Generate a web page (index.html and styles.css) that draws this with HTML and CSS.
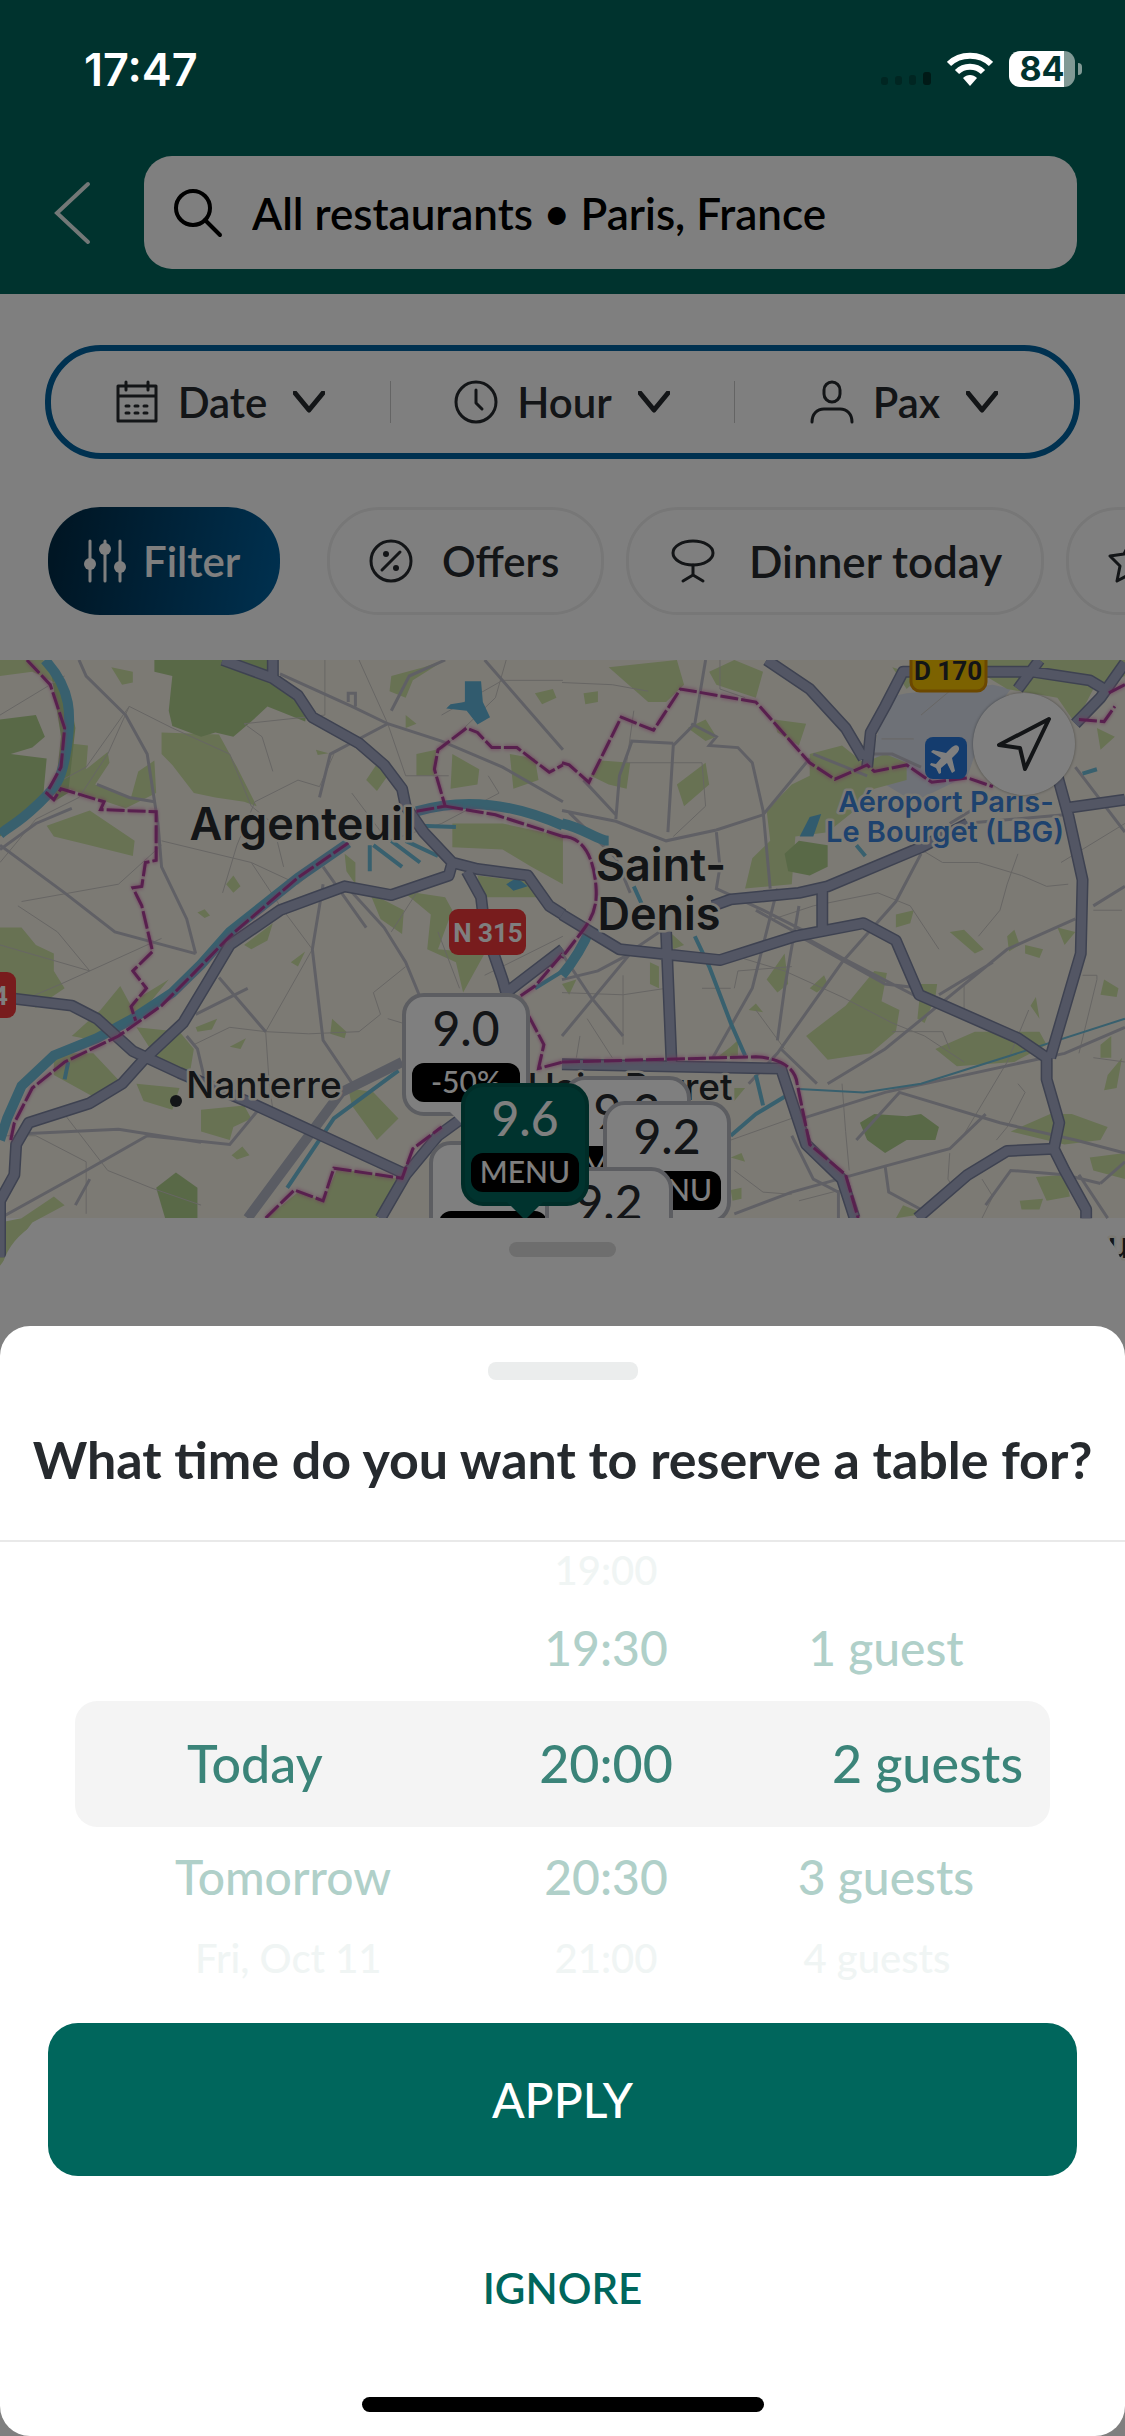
FILE: index.html
```
<!DOCTYPE html>
<html lang="en">
<head>
    <meta charset="UTF-8">
    <meta name="viewport" content="width=device-width, initial-scale=1.0">
    <title>Restaurants in Paris</title>
    <link rel="stylesheet" href="styles.css">
</head>
<body>
    <div class="screen">
        <div class="app">
            <header class="header">
                <button class="back-button" aria-label="Back">
                    <svg width="42" height="64" viewBox="0 0 42 64"><path d="M36 3L5 32l31 29" fill="none" stroke="#fff" stroke-width="4" stroke-linecap="round"/></svg>
                </button>
                <div class="search-box">
                    <svg width="50" height="50" viewBox="0 0 50 50" fill="none" stroke="#000" stroke-width="4" stroke-linecap="round"><circle cx="20" cy="20" r="17"/><path d="M32 32l15 15"/></svg>
                    <input class="search-input" type="text" aria-label="Search" value="All restaurants • Paris, France">
                </div>
            </header>

            <div class="filters">
                <div class="booking-bar">
                    <button class="booking-button">
                        <svg class="icon" viewBox="0 0 42 42"><path d="M2 5h38v35H2zM2 15h38M10 1v8M32 1v8"/><path d="M10 25h3M19 25h3M28 25h3M10 32h3M19 32h3M28 32h3"/></svg>
                        Date
                        <svg class="arrow" viewBox="0 0 32 22"><path d="M2 2l14 17L30 2"/></svg>
                    </button>
                    <button class="booking-button">
                        <svg class="icon" viewBox="0 0 42 42"><circle cx="21" cy="21" r="20"/><path d="M21 9v13l6 6"/></svg>
                        Hour
                        <svg class="arrow" viewBox="0 0 32 22"><path d="M2 2l14 17L30 2"/></svg>
                    </button>
                    <button class="booking-button">
                        <svg class="icon" viewBox="0 0 42 42"><rect x="13" y="1" width="16" height="20" rx="8"/><path d="M1 41c0-8 5-13 12-13h16c7 0 12 5 12 13"/></svg>
                        Pax
                        <svg class="arrow" viewBox="0 0 32 22"><path d="M2 2l14 17L30 2"/></svg>
                    </button>
                </div>
                <div class="chips">
                    <button class="chip chip-filter">
                        <svg class="icon" viewBox="0 0 42 42"><path d="M6 1v40M21 1v40M36 1v40"/><g fill="#fff" stroke="none"><circle cx="6" cy="24" r="6"/><circle cx="21" cy="9" r="6"/><circle cx="36" cy="27" r="6"/></g></svg>
                        Filter
                    </button>
                    <button class="chip chip-offers">
                        <svg class="icon" viewBox="0 0 42 42"><circle cx="21" cy="21" r="20"/><path d="M12 30l18-18"/><g fill="#262a2e" stroke="none"><circle cx="16" cy="14" r="3"/><circle cx="26" cy="28" r="3"/></g></svg>
                        Offers
                    </button>
                    <button class="chip chip-dinner">
                        <svg class="icon" viewBox="0 0 42 42"><ellipse cx="21" cy="13" rx="20" ry="12"/><path d="M21 25v10M11 41l10-6 10 6"/></svg>
                        Dinner today
                    </button>
                    <button class="chip chip-star" aria-label="Top rated">
                        <svg class="icon" viewBox="0 0 42 42"><path d="M21 2l6 12 14 2-10 10 3 15-13-7-13 7 3-15L1 16l14-2z"/></svg>
                    </button>
                </div>
            </div>

            <main class="map">
                <svg class="map-canvas" viewBox="0 0 1125 680" preserveAspectRatio="xMidYMin slice">
                    <!-- west tile -->
                    <g class="tile" transform="translate(0 -10) scale(.359 .4337)">
                        <g class="park">
                            <path d="M450 190L610 195 660 270 715 360 680 350 600 340 540 330 480 265 450 240z"/>
                            <path d="M190 215L245 220 240 275 300 235 305 260 265 310 365 340 385 280 430 255 435 330 350 365 190 320z"/>
                            <path d="M130 405L250 370 375 440 370 475 250 450 150 430z"/>
                            <path d="M0 640L60 640 100 680 150 700 150 740 180 780 100 825 40 790 0 800z"/>
                            <path d="M200 890L280 830 335 775 365 820 390 800 470 760 410 820 260 900z"/>
                            <path d="M380 870L500 880 540 920 530 970 450 960zM150 930L260 930 340 1000 260 1030 150 980zM380 1000L500 1010 480 1060 400 1040z"/>
                            <path d="M190 90L120 23H0V60L90 50z"/>
                            <path d="M310 40L370 50 370 75 340 80zM630 540L650 520 670 545 650 560zM550 605L570 598 585 612 570 618zM680 680L760 630 745 670 700 690z"/>
                            <path d="M1090 60L1180 40 1240 23 1150 70 1130 110 1085 95zM1490 100L1540 90 1550 110 1510 125zM1130 150L1160 170 1130 180zM880 230L915 238 885 242z"/>
                            <path d="M1160 240L1215 230 1210 290 1160 290zM1260 240L1335 275 1330 310 1255 320zM1420 240L1490 250 1500 300 1430 320z"/>
                            <path d="M1260 400L1400 400 1568 430V540L1480 500 1400 460 1260 455zM1330 520L1480 535 1500 570 1340 570z"/>
                            <path d="M1030 560L1125 600 1120 655 1060 620zM1120 555L1240 570 1260 600 1220 690 1350 700 1290 790 1270 720 1190 690 1200 610zM960 470L990 490 990 540 965 510zM1020 300L1060 250 1080 290 1050 325z"/>
                            <path d="M810 720L850 695 830 730zM925 850L965 880 960 895 920 885zM640 915L685 895 670 920zM645 1165L675 1145 695 1165 660 1175zM545 870L605 850 590 875 550 880z"/>
                            <path d="M560 1060L680 1050 700 1080 650 1100 640 1130 560 1110zM970 1010L1040 1020 1110 1080 1050 1130 980 1050z"/>
                            <path d="M940 1195L1110 1220 1050 1310H740L830 1250 900 1270zM60 1310L150 1260 180 1280 90 1320 0 1420V1320z"/>
                        </g>
                        <g class="forest">
                            <path d="M430 23H775L770 50 800 90 860 120 850 165 745 130 700 165 650 200 600 190 560 200 480 175 470 140 480 60 430 50z"/>
                            <path d="M0 160L100 150 125 200 90 225 30 240 130 250 120 340 0 430zM140 40L190 90 210 180 190 330 150 350 170 200z"/>
                            <path d="M435 1240L490 1205 550 1240 550 1310H460z"/>
                        </g>
                        <g class="minor">
                            <path d="M0 150L180 60M150 310L240 270 360 130 480 180 640 240 700 360 760 400 790 500M360 130L300 240 220 340 100 390 0 490M620 560L660 450 710 350 830 300 890 315 930 240"/>
                            <path d="M450 440L700 490 830 540 960 450M700 490L780 590 870 690 740 880 640 870 540 910M740 880L860 885 1000 880 1060 840 1040 790 1130 730M0 680L250 740 450 665M250 740L170 770 0 830M50 590L160 650 250 740M60 580L330 540 450 450"/>
                            <path d="M740 880L750 1000 760 1060M170 1060L300 1200 420 1240 560 1280M0 1120L100 1120 240 1180 240 1300M980 330L1080 440 1230 400 1390 330 1360 290M1000 23L1080 170 1130 290 1250 290M905 23V150L680 170 730 200 760 280M1410 23L1380 110 1230 230M1568 70L1400 70 1230 150M1080 850L1200 880M1090 650L1160 560 1260 520M1350 750L1568 660M1220 650L1280 780"/>
                        </g>
                        <g class="road">
                            <path d="M220 23L240 60 350 150 410 240 440 400 450 500 520 620 545 700M0 450L180 560 320 650 545 700M0 1310L240 1200 410 1120 640 1140 720 1060M80 1115L330 1105 560 1135M0 460L100 400 200 365M780 55L980 130 1080 170 1230 210 1400 270 1568 350M1080 170L920 240 890 340M1240 23L1140 60 1090 140M545 840L690 780M610 755L740 880M900 540L870 690 900 900 990 1010M960 540L1070 640 1130 720 1170 800M990 130V100H970V120M900 500L1020 640M1350 23L1568 230M520 890L550 920 570 990M210 1280L250 1220"/>
                            <path d="M270 310L360 340 430 350"/>
                        </g>
                        <g class="water">
                            <path class="river" d="M125 23C200 90 200 150 185 230S150 320 100 360 20 410 0 425"/>
                            <path class="river" d="M970 445L830 525 640 650 560 725 480 790 370 850 270 895 150 935 60 1005 20 1080 0 1130"/>
                            <path class="river" d="M1160 372C1300 340 1430 355 1568 405"/>
                            <path class="stream" d="M1170 405L1270 408M1030 450V510M1040 450L1120 500M1090 440L1170 490M1130 440L1220 475M1568 740L1490 780M800 1240L930 1080 1110 970M180 990L190 950"/>
                            <path class="lake" d="M1295 72H1340L1345 120 1365 155 1330 172 1300 140 1243 135 1255 125 1295 120zM1410 540L1440 525 1470 545 1430 555z"/>
                        </g>
                        <path class="road wide" d="M690 1310L950 1020 1120 950"/>
                        <g class="highway-edge">
                            <path id="west-roads" d="M620 23L760 65 830 105 870 155 1000 215 1070 265 1120 320 1130 360 1180 420 1260 490 1330 505 1470 520 1530 590 1568 610M760 23V65M1260 490L1250 520 1090 565 960 545 780 600 640 680 590 750 510 860 400 945 340 1000 250 1045 80 1090 45 1140 40 1210 0 1270V1400M0 800L200 820 270 850 370 925 500 975 700 1045 1120 1205M1300 510L1340 570 1350 640 1400 760 1410 790 1568 690M1060 1310L1130 1210 1220 1120 1320 1060"/>
                        </g>
                        <use href="#west-roads" class="highway"/>
                        <g class="border">
                            <path d="M75 23L140 80 180 180 170 270 130 330 150 345 170 320 290 350 280 368 435 373V485L405 490 395 545 370 548 395 590 425 695 370 740 408 780 365 822 378 855M970 445L830 525 640 660 540 745 450 820 330 890 180 950 90 1010 40 1090 30 1130"/>
                            <path d="M1160 372L1240 360 1210 275 1220 230 1300 180 1330 190 1370 225 1440 225 1530 282 1568 265M1240 360L1380 380 1568 430M1568 700L1490 775 1445 800 1515 910 1500 965 1568 950M740 1310L820 1245 900 1270 930 1195 1120 1218 1150 1150 1230 1100"/>
                        </g>
                    </g>
                    <!-- east tile -->
                    <g class="tile" transform="translate(562 -10) scale(.359 .4337)">
                        <g class="airport">
                            <path d="M900 110L960 100 1200 80 1250 90 1180 170 1130 290 980 350 880 300 870 230z"/>
                        </g>
                        <g class="park">
                            <path d="M130 40L320 23 340 80 290 120 240 120zM60 100L100 95 100 120 65 125zM80 290L110 255 190 260 180 320 130 310zM350 180L400 160 430 200 400 210zM320 310L400 260 410 310 340 360z"/>
                            <path d="M410 50L480 23 560 50 540 110 430 80zM590 160L680 170 660 220 600 190zM690 240L780 220 840 260 900 240 960 260 960 300 870 320 830 360 740 420 650 430 640 540 510 550 530 480 580 440 570 370 640 310 690 290z"/>
                            <path d="M920 40L1000 60 960 90zM1180 23H1568V60L1480 90 1430 170 1380 110 1240 90 1180 60zM1490 180L1540 200 1500 230z"/>
                            <path d="M680 890L790 820 870 740 905 745 890 810 940 830 930 880 860 930 740 945z"/>
                            <path d="M1080 650L1120 645 1175 690 1150 700zM1240 660L1260 645 1275 680 1245 695zM1290 680L1340 690 1330 710 1290 700zM1380 640L1430 650 1400 680zM930 610L980 600 970 630 930 640zM1000 770L1045 770 1040 800 1010 860 990 850z"/>
                            <path d="M1040 920L1150 880 1330 880 1350 910 1260 950 1100 960zM1510 760L1550 780 1545 800 1500 795zM1500 910L1530 890 1530 940 1500 940zM1520 980L1560 940 1545 1010 1510 1015zM1305 820L1320 800 1330 850z"/>
                            <path d="M1360 1070L1420 1070 1520 1100 1500 1130 1400 1140 1250 1110zM1320 1215L1400 1210 1415 1260 1350 1270zM1275 1270L1340 1265 1330 1290 1280 1290zM1470 1170L1568 1160V1220L1480 1200zM930 1310L950 1280 1010 1300z"/>
                            <path d="M570 760L620 700 630 770 600 790zM690 780L730 750 740 770 710 790zM520 830L540 815 560 835zM245 720L270 730 270 780 245 770zM0 770L40 760 20 795zM300 650L340 680 310 690zM480 1010L510 1010 480 1040zM470 1170L500 1160 510 1180zM470 1245L500 1240 500 1265 475 1270zM470 915L490 900 490 935 430 940z"/>
                        </g>
                        <g class="forest">
                            <path d="M620 470L660 440 740 450 740 500 690 520 630 510zM830 1090L870 1070 960 1075 1000 1070 1050 1100 1040 1130 960 1130 900 1160 850 1130z"/>
                        </g>
                        <g class="minor">
                            <path d="M0 75L140 80 240 95M200 140L180 260 390 260 400 360 310 430M440 23V90L510 110M590 620L700 590 880 560 970 590 1050 690M1000 460L1060 490 1160 490 1280 520 1350 545 1410 540M1270 470L1240 540 1220 600 1160 660M500 710L620 740 780 800 920 860 1010 890 1120 950M480 780L490 740 640 730M0 790L170 795 290 780M170 750V910M70 850L140 940M50 890L40 940M390 780H470M540 830L620 920M920 880H1060L1080 920M1110 1130L1240 950 1300 830M1120 770V850L1180 870M1450 750H1490L1490 760 1440 930M1270 1000L1290 1020 1240 1100 1210 1130M780 1000L790 1110 800 1200M1170 1220L1200 1260 1170 1310M1480 940L1568 950M470 1130L640 1080M480 1200L560 1250 640 1255M660 1270L800 1240M1080 1160L1075 1220 1090 1240M1000 150L1130 60M890 205L980 205M1560 600L1480 600M1390 490L1568 400"/>
                        </g>
                        <g class="road">
                            <path d="M0 370L150 395 290 440 430 415 560 380 690 250M400 23L370 170 310 220 295 420M190 210L310 215M360 170L430 200 410 220 490 225 530 260 560 370 580 550M20 375L150 480 190 560M150 390L160 290 195 210M430 420L440 500 430 550 560 600 680 650M60 300L150 380M0 890L200 690 290 640M0 700L80 800 170 890M600 550L530 780 420 940M660 590L620 780 600 900M1000 470L930 580 780 720 600 930 520 1000M540 600L780 710 990 800M640 650L900 770 1000 780M740 1000L900 920 1240 690 1430 620M1050 795L1200 720M610 920L710 1000M670 1080L900 1020 1400 930 1568 870M820 1130L940 1020 1220 1090 1430 1130 1568 1160M900 1190L1080 1150 1180 1070M900 1190L910 1250 1000 1290M640 1120L700 1220 770 1250V1310M480 1300L640 1250 900 1190M1500 1230L1568 1180M1440 1210L1520 1310M1180 1280L1250 1200 1400 1210 1500 1230M700 240L850 290M860 240L920 240 1000 270M1120 400L1400 380M1080 400L1180 350M0 760L100 740 190 700M1430 270L1568 420M1480 590L1568 545"/>
                        </g>
                        <g class="water">
                            <path class="river" d="M0 400C60 410 100 440 130 440"/>
                            <path class="river" d="M80 640C60 680 30 720 0 750"/>
                            <path class="stream" d="M200 545L230 600M370 660L410 730 470 860 510 935M540 980L560 1050M470 1120L540 1070 620 1030M1450 285L1490 275M820 450L845 475"/>
                            <path class="canal" d="M660 1012L840 1020 1000 1000 1250 935 1568 850"/>
                            <path class="lake" d="M690 385L722 378 700 430 662 430z"/>
                        </g>
                        <g class="highway-edge">
                            <path id="east-roads" d="M570 23L690 90 790 180 840 250M850 270L860 190 900 130 950 50H1310L1470 70 1520 95M1330 23L1270 90M1568 30L1500 110 1430 170M1380 290L1410 380 1450 530 1445 700 1360 940M1400 365L1568 345M1130 400L1000 455 740 545 660 560 470 575 420 590M725 545V650M0 610L160 690 440 715 650 660 840 630 930 670 995 795 1270 895 1350 940 1350 990 1385 1090 1370 1150 1240 1155 1130 1210 990 1310M1370 1150L1400 1200 1460 1290V1310M290 650L305 950M0 955L610 965 680 1140 780 1220 815 1310"/>
                        </g>
                        <use href="#east-roads" class="highway"/>
                        <g class="border">
                            <path d="M0 260L20 265 75 305 165 155 255 185 330 90 540 120 690 260 760 298 850 265 870 280 960 265 1030 305 1130 295 1200 315M1440 160L1510 165 1540 130M1568 80L1520 100M0 430C60 430 90 480 95 550S60 640 0 710M0 950L540 938C600 940 650 960 655 1000L690 1140 790 1210 825 1310"/>
                        </g>
                    </g>
                    <rect class="sign sign-red" x="449" y="249" width="77" height="46" rx="9"/>
                    <text class="sign-text" x="488" y="282">N 315</text>
                    <rect class="sign sign-red" x="-60" y="312" width="76" height="46" rx="9"/>
                    <text class="sign-text" x="-7" y="345">14</text>
                    <rect class="sign sign-yellow" x="911" y="-20" width="75" height="51" rx="9"/>
                    <text class="sign-text sign-dark" x="948" y="20">D 170</text>
                    <rect class="airport-sign" x="925" y="77" width="42" height="42" rx="8"/>
                    <path d="M958 86c-2-2-5 0-7 2l-5 5-13-3-2 2 10 6-5 6-5-1-1 2 6 3 3 6 2-1v-5l6-5 5 10 3-2-3-13 5-5c2-2 3-5 1-7z" fill="#fff"/>
                    <text class="label city" x="302" y="180">Argenteuil</text>
                    <text class="label city" x="661" y="221">Saint-</text>
                    <text class="label city" x="659" y="270">Denis</text>
                    <text class="label town" x="264" y="438">Nanterre</text>
                    <circle cx="176" cy="441" r="6" fill="#262a2e"/>
                    <text class="label town" x="630" y="440">Hain-Perret</text>
                    <text class="label town" x="1123" y="598">ui</text>
                    <text class="label airport-name" x="946" y="152">Aéroport Paris-</text>
                    <text class="label airport-name" x="945" y="182">Le Bourget (LBG)</text>
                    <text class="label river-name" x="-14" y="520" transform="rotate(-58 -14 520)">vry</text>
                </svg>
                <button class="locate-button" aria-label="My location">
                    <svg width="56" height="56" viewBox="0 0 56 56"><path d="M53 3L3 29l21 3 5 21z" fill="none" stroke="#262a2e" stroke-width="4" stroke-linejoin="round"/></svg>
                </button>
                <button class="pin pin-a"><span class="score">9.0</span><span class="tag">-50%</span></button>
                <button class="pin pin-b" aria-label="Restaurant"><span class="score"></span><span class="tag"></span></button>
                <button class="pin pin-c"><span class="score">9.2</span><span class="tag">MENU</span></button>
                <button class="pin pin-d"><span class="score">9.2</span><span class="tag">MENU</span></button>
                <button class="pin pin-e"><span class="score">9.2</span><span class="tag"></span></button>
                <button class="pin pin-active"><span class="score">9.6</span><span class="tag">MENU</span></button>
            </main>
            <div class="results"><div class="results-handle"></div></div>
        </div>

        <div class="overlay"></div>

        <div class="status-bar">
            <span class="clock">17:47</span>
            <div class="status-icons">
                <svg width="50" height="16" viewBox="0 0 50 16" fill="#002622"><rect y="6" width="7" height="8" rx="3"/><rect x="14" y="5" width="7" height="9" rx="3"/><rect x="28" y="4" width="7" height="10" rx="3"/><rect x="42" y="1" width="8" height="13" rx="3" fill="#001a17"/></svg>
                <svg width="46" height="34" viewBox="0 0 46 34" fill="none" stroke="#fff" stroke-width="6"><path d="M2 12C13 1 33 1 44 12"/><path d="M10 20c7-7 19-7 26 0"/><path d="M23 34l-7-8c4-4 10-4 14 0z" fill="#fff" stroke="none"/></svg>
                <div class="battery"><span class="battery-level">84</span></div>
            </div>
        </div>

        <section class="sheet">
            <div class="sheet-header">
                <div class="sheet-handle"></div>
                <h1 class="sheet-title">What time do you want to reserve a table for?</h1>
            </div>
            <div class="picker">
                <div class="picker-row far">
                    <span></span>
                    <button class="option">19:00</button>
                    <span></span>
                </div>
                <div class="picker-row near">
                    <span></span>
                    <button class="option">19:30</button>
                    <button class="option">1 guest</button>
                </div>
                <div class="picker-row selected">
                    <button class="option day">Today</button>
                    <button class="option">20:00</button>
                    <button class="option guests">2 guests</button>
                </div>
                <div class="picker-row near">
                    <button class="option day">Tomorrow</button>
                    <button class="option">20:30</button>
                    <button class="option">3 guests</button>
                </div>
                <div class="picker-row far">
                    <button class="option day">Fri, Oct 11</button>
                    <button class="option">21:00</button>
                    <button class="option">4 guests</button>
                </div>
            </div>
            <button class="apply-button">APPLY</button>
            <button class="ignore-button">IGNORE</button>
            <div class="home-indicator"></div>
        </section>
    </div>
</body>
</html>
```
FILE: styles.css
```
* {
    box-sizing: border-box;
}

body {
    margin: 0;
    font-family: Lato, "Open Sans", sans-serif;
    color: #262a2e;
    background-color: #7f7f7f;
}

button,
input {
    margin: 0;
    padding: 0;
    border: none;
    background: none;
    font: inherit;
    color: inherit;
    cursor: pointer;
}

.screen {
    position: relative;
    min-height: 100vh;
    overflow: hidden;
}

.app {
    display: flex;
    flex-direction: column;
    min-height: 100vh;
    background-color: #fff;
}

/* Header */
.header {
    display: flex;
    align-items: center;
    gap: 50px;
    padding: 156px 48px 25px 52px;
    background-color: #00665c;
}

.back-button {
    display: flex;
    opacity: 0.9;
}

.search-box {
    flex: 1;
    display: flex;
    align-items: center;
    gap: 29px;
    height: 113px;
    padding: 0 29px;
    border-radius: 28px;
    background-color: #fff;
}

.search-input {
    flex: 1;
    min-width: 0;
    font-size: 44px;
    font-weight: 600;
    color: #000;
}

/* Filters */
.filters {
    padding: 51px 0 45px;
    font-size: 42px;
    font-weight: 600;
}

.icon {
    flex: none;
    width: 42px;
    height: 42px;
    overflow: visible;
    fill: none;
    stroke: #262a2e;
    stroke-width: 3;
    stroke-linecap: round;
    stroke-linejoin: round;
}

.arrow {
    width: 32px;
    height: 22px;
    margin-left: 6px;
    fill: none;
    stroke: #262a2e;
    stroke-width: 5;
    stroke-linecap: round;
    stroke-linejoin: round;
}

.booking-bar {
    display: grid;
    grid-template-columns: 339fr 344fr 340fr;
    align-items: center;
    height: 114px;
    margin: 0 45px 48px;
    border: 6px solid #0062a0;
    border-radius: 56px;
}

.booking-button {
    display: flex;
    align-items: center;
    justify-content: center;
    gap: 20px;
    height: 42px;
}

.booking-button + .booking-button {
    border-left: 1px solid #c8c8c8;
}

.chips {
    display: flex;
    gap: 22px;
    padding-left: 48px;
    overflow: hidden;
}

.chip {
    flex: none;
    display: flex;
    align-items: center;
    height: 108px;
    border: 3px solid #eeeeee;
    border-radius: 52px;
}

.chip-filter {
    gap: 17px;
    width: 232px;
    margin-right: 25px;
    padding-left: 36px;
    border: none;
    color: #fff;
    background: linear-gradient(100deg, #002c48 5%, #0062a0);
}

.chip-filter .icon {
    stroke: #fff;
}

.chip-offers {
    gap: 30px;
    width: 277px;
    padding-left: 40px;
}

.chip-dinner {
    gap: 35px;
    width: 418px;
    padding-left: 43px;
    font-size: 44px;
}

.chip-star {
    width: 277px;
    padding-left: 40px;
}

/* Map */
.map {
    position: relative;
    height: 558px;
    background-color: #f8f4e9;
}

.map-canvas {
    display: block;
    width: 100%;
    height: 680px;
}

.tile path,
.tile use {
    vector-effect: non-scaling-stroke;
}

.park {
    fill: #d0e4a6;
}

.forest {
    fill: #b2d28f;
}

.airport {
    fill: #dce2ee;
}

.minor {
    fill: none;
    stroke: #cfccc8;
    stroke-width: 1;
}

.road {
    fill: none;
    stroke: #c0c0ca;
    stroke-width: 3;
}

.wide {
    stroke: #b4b8c6;
    stroke-width: 10;
}

.water {
    fill: none;
    stroke: #70c0dc;
}

.river {
    stroke-width: 10;
}

.stream {
    stroke-width: 4;
}

.canal {
    stroke-width: 2;
}

.lake {
    fill: #62b6dc;
    stroke: none;
}

.highway-edge {
    fill: none;
    stroke: #7c84a2;
    stroke-width: 12;
    stroke-linejoin: round;
}

.highway {
    fill: none;
    stroke: #a6adc8;
    stroke-width: 9;
    stroke-linejoin: round;
}

.border {
    fill: none;
    stroke: #b0409c;
    stroke-width: 3;
    stroke-dasharray: 18 3;
    filter: drop-shadow(0 0 5px #e070b8);
}

.sign-red {
    fill: #f0393b;
}

.sign-yellow {
    fill: #f8c400;
    stroke: #d89000;
    stroke-width: 3;
}

.airport-sign {
    fill: #2878dc;
}

.sign-text {
    font-family: Roboto, Arial, sans-serif;
    font-size: 26px;
    font-weight: 700;
    text-anchor: middle;
    fill: #fff;
}

.sign-dark {
    fill: #262a2e;
}

.label {
    font-family: Inter, sans-serif;
    text-anchor: middle;
    fill: #262a2e;
    stroke: #f8f4e9;
    stroke-width: 5;
    stroke-linejoin: round;
    paint-order: stroke;
}

.city {
    font-size: 45px;
    font-weight: 600;
}

.town {
    font-size: 37px;
    font-weight: 500;
}

.airport-name {
    font-size: 29px;
    font-weight: 600;
    fill: #3c84dc;
}

.river-name {
    font-size: 28px;
    font-style: italic;
    fill: #3c94cc;
}

.locate-button {
    position: absolute;
    top: 33px;
    right: 50px;
    display: flex;
    align-items: center;
    justify-content: center;
    width: 102px;
    height: 102px;
    border-radius: 50%;
    background-color: #fff;
    box-shadow: 0 0 3px rgba(0, 0, 0, 0.4);
}

.pin {
    position: absolute;
    display: flex;
    flex-direction: column;
    align-items: center;
    justify-content: space-between;
    width: 128px;
    height: 123px;
    padding: 4px 5px 10px;
    border: 4px solid #b8bac2;
    border-radius: 22px;
    background-color: #fff;
}

.pin::after {
    content: "";
    position: absolute;
    top: 115px;
    left: 44px;
    border: 14px solid transparent;
    border-top-color: #fff;
    border-bottom: none;
}

.score {
    font-size: 48px;
    font-weight: 500;
    line-height: 54px;
}

.tag {
    width: 108px;
    height: 39px;
    border-radius: 12px;
    background-color: #000;
    color: #fff;
    font-size: 30px;
    font-weight: 500;
    line-height: 36px;
}

.pin-a {
    top: 333px;
    left: 402px;
}

.pin-b {
    top: 481px;
    left: 429px;
}

.pin-c {
    top: 416px;
    left: 563px;
}

.pin-d {
    top: 441px;
    left: 603px;
}

.pin-e {
    top: 507px;
    left: 545px;
}

.pin-active {
    top: 423px;
    left: 461px;
    border-color: #005a50;
    background-color: #00665c;
    color: #fff;
}

.pin-active::after {
    left: 42px;
    border-width: 18px;
    border-top-color: #00665c;
}

.results {
    position: relative;
    flex: 1;
    border-radius: 64px 64px 0 0;
    background-color: #fff;
}

.results-handle {
    width: 107px;
    height: 15px;
    margin: 24px auto 0;
    border-radius: 8px;
    background-color: #dcdcdc;
}

.overlay {
    position: absolute;
    inset: 0;
    background-color: rgba(0, 0, 0, 0.5);
}

/* Status bar */
.status-bar {
    position: absolute;
    top: 0;
    left: 0;
    right: 0;
    display: flex;
    align-items: center;
    justify-content: space-between;
    height: 138px;
    padding: 0 50px 0 84px;
    color: #fff;
    font-family: Inter, sans-serif;
}

.clock {
    font-size: 45px;
    font-weight: 600;
}

.status-icons {
    display: flex;
    align-items: center;
    gap: 16px;
}

.status-icons svg:first-child {
    margin-top: 20px;
}

.battery {
    position: relative;
    width: 66px;
    height: 36px;
    border-radius: 11px;
    background: linear-gradient(90deg, #fff 84%, #809995 84%);
    color: #00332e;
    text-align: center;
}

.battery::after {
    content: "";
    position: absolute;
    top: 12px;
    right: -7px;
    width: 4px;
    height: 12px;
    border-radius: 0 4px 4px 0;
    background-color: #809995;
}

.battery-level {
    font-size: 34px;
    font-weight: 700;
    line-height: 36px;
}

/* Bottom sheet */
.sheet {
    position: absolute;
    left: 0;
    right: 0;
    bottom: 0;
    border-radius: 30px;
    background-color: #fff;
    display: flex;
    flex-direction: column;
}

.sheet-header {
    padding: 36px 0 51px;
    border-bottom: 2px solid #e9e9e9;
}

.sheet-handle {
    width: 150px;
    height: 18px;
    margin: 0 auto 49px;
    border-radius: 8px;
    background-color: #ebeded;
}

.sheet-title {
    margin: 0;
    font-size: 52px;
    font-weight: 700;
    line-height: 60px;
    text-align: center;
    white-space: nowrap;
}

/* The wheel rows fade and shrink away from the selected one */
.picker-row {
    display: grid;
    align-items: center;
    font-weight: 500;
    line-height: 1;
}

.option.day {
    text-align: left;
}

.option.guests {
    text-align: right;
}

.far {
    grid-template-columns: 291fr 240fr 302fr;
    height: 56px;
    padding: 0 97px 0 195px;
    font-size: 40px;
    color: #f0f5f4;
}

.near {
    grid-template-columns: 311fr 240fr 320fr;
    height: 103px;
    padding: 0 79px 4px 175px;
    font-size: 48px;
    color: #b0d0c9;
}

.selected {
    grid-template-columns: 299fr 240fr 297fr;
    height: 126px;
    margin: 0 75px;
    padding: 0 27px 2px 112px;
    border-radius: 22px;
    background-color: #f4f4f4;
    font-size: 52px;
    color: #3b8479;
}

.apply-button {
    height: 153px;
    margin: 37px 48px 72px;
    border-radius: 30px;
    background-color: #00665c;
    color: #fff;
    font-size: 48px;
    font-weight: 500;
}

.ignore-button {
    align-self: center;
    height: 80px;
    color: #00665c;
    font-size: 42px;
    font-weight: 600;
}

.home-indicator {
    width: 402px;
    height: 15px;
    margin: 69px auto 24px;
    border-radius: 8px;
    background-color: #000;
}
```
